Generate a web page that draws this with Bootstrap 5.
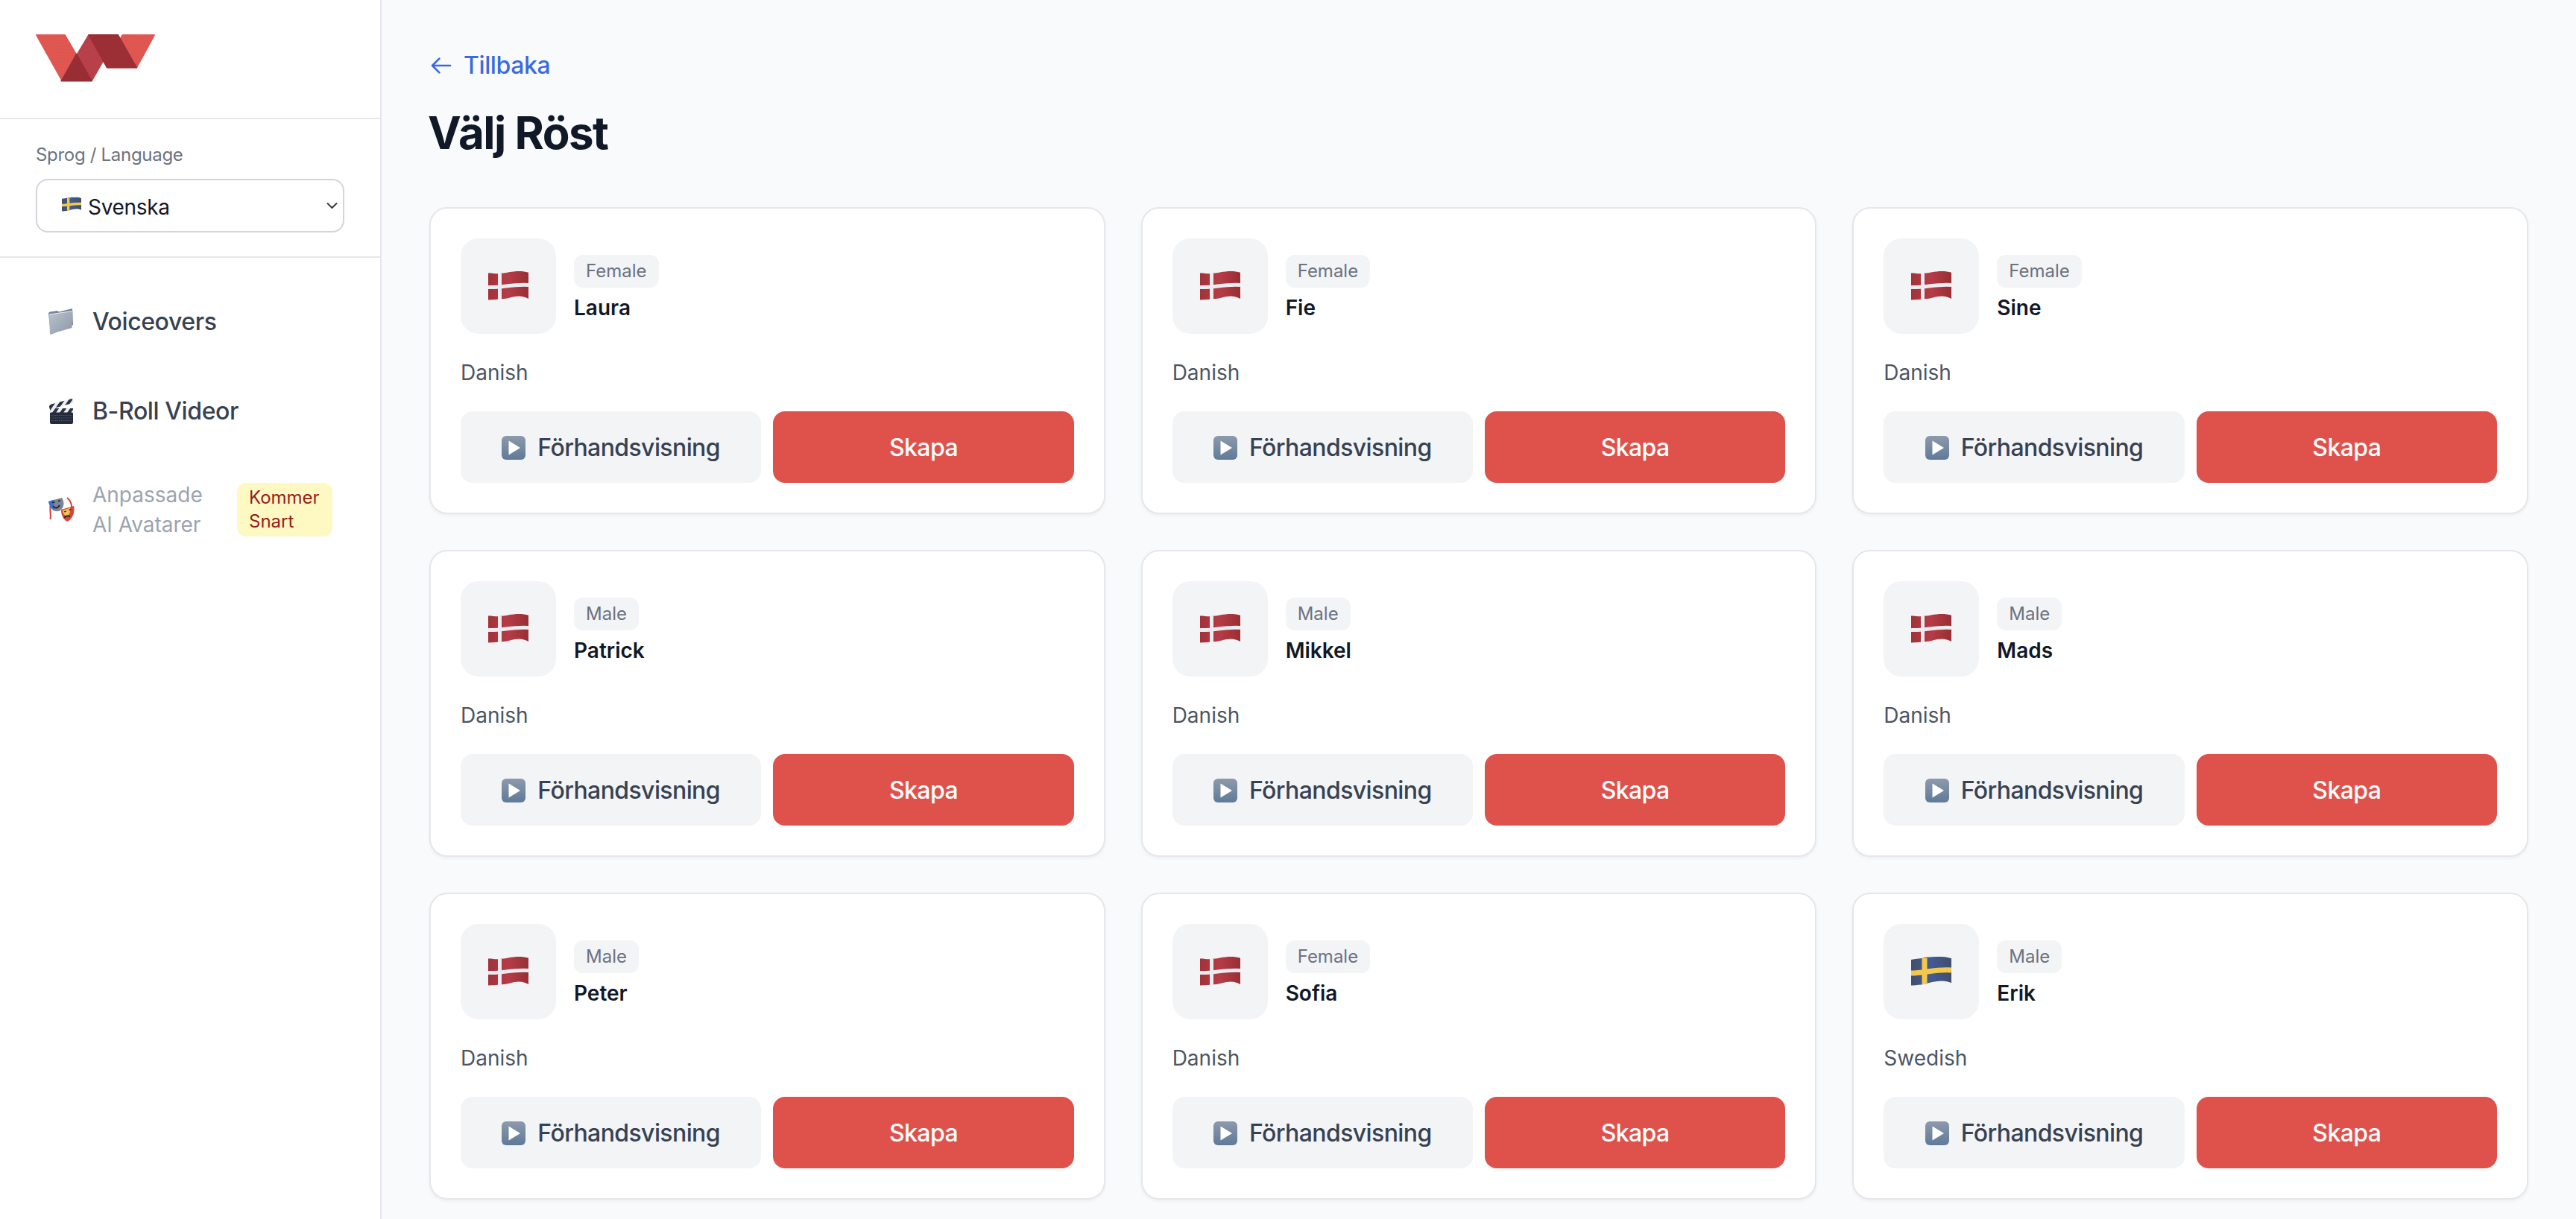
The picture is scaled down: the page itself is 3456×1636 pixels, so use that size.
<!DOCTYPE html>
<html lang="sv">
<head>
  <meta charset="UTF-8">
  <meta name="viewport" content="width=device-width, initial-scale=1.0">
  <title>Välj Röst</title>
  <link href="https://cdn.jsdelivr.net/npm/bootstrap@5.3.0/dist/css/bootstrap.min.css" rel="stylesheet">
  <style>
    body {
      font-family: Inter, "Liberation Sans", sans-serif;
      font-size: 32px;
      background-color: #f9fafb;
      color: #111827;
    }
    .side-panel {
      width: 512px;
      flex: 0 0 512px;
      background-color: #fff;
      border-right: 2px solid #e5e7eb;
    }
    .side-logo {
      height: 160px;
      padding: 46px 48px 0;
      border-bottom: 2px solid #e5e7eb;
    }
    .side-logo svg {
      display: block;
      width: 160px;
      height: 64px;
    }
    .lang-box {
      padding: 32px 48px;
      border-bottom: 2px solid #e5e7eb;
    }
    .lang-label {
      display: block;
      font-size: 24px;
      line-height: 32px;
      letter-spacing: -.3px;
      color: #6b7280;
      margin-bottom: 16px;
    }
    .lang-select {
      height: 72px;
      padding: 3px 40px 0 68px;
      font-size: 28px;
      letter-spacing: -.3px;
      color: #111827;
      border: 2px solid #d1d5db;
      border-radius: 16px;
      background-position: right 4px center;
      background-size: 21px 16px;
    }
    .lang-flag {
      position: absolute;
      left: 35px;
      top: 24px;
      width: 26px;
      height: 21px;
    }
    .side-nav {
      padding: 34px 32px;
      gap: 16px;
    }
    .nav-row {
      padding: 24px 32px;
      min-height: 104px;
      gap: 24px;
      font-size: 32px;
      font-weight: 500;
      line-height: 56px;
      letter-spacing: -.4px;
      color: #374151;
      text-decoration: none;
    }
    .nav-row svg {
      flex: 0 0 36px;
      width: 36px;
      height: 36px;
    }
    .nav-off {
      font-size: 28px;
      font-weight: 400;
      line-height: 40px;
      letter-spacing: 0;
      color: #9ca3af;
    }
    .soon-tag {
      margin-left: auto;
      min-width: 128px;
      padding: 4px 16px;
      font-size: 24px;
      line-height: 32px;
      color: #991b1b;
      background-color: #fef9c3;
      border-radius: 12px;
    }
    .main-area {
      padding: 64px;
      min-width: 0;
    }
    .back-link {
      gap: 14px;
      font-size: 32px;
      font-weight: 500;
      line-height: 48px;
      letter-spacing: -.4px;
      color: #3a6ae0;
      text-decoration: none;
      margin-bottom: 30px;
    }
    .back-link svg {
      width: 32px;
      height: 32px;
    }
    .page-title {
      margin-left: -2px;
      font-size: 60px;
      font-weight: 700;
      line-height: 72px;
      letter-spacing: -1.5px;
      color: #111827;
      margin-bottom: 64px;
    }
    .voice-grid {
      display: grid;
      grid-template-columns: repeat(3, 1fr);
      gap: 48px;
    }
    .voice-card {
      padding: 40px;
      border: 2px solid #e5e7eb;
      border-radius: 24px;
      box-shadow: 0 2px 4px rgba(0, 0, 0, .05);
    }
    .flag-box {
      width: 128px;
      height: 128px;
      background-color: #f3f4f6;
      border-radius: 24px;
    }
    .flag-box svg {
      width: 54px;
      height: 40px;
    }
    .voice-meta {
      margin-top: 6px;
    }
    .gender-tag {
      padding: 6px 16px;
      font-size: 24px;
      line-height: 32px;
      color: #6b7280;
      background-color: #f3f4f6;
      border-radius: 12px;
    }
    .voice-name {
      margin-top: 7px;
      font-size: 28px;
      font-weight: 600;
      line-height: 40px;
      color: #111827;
    }
    .voice-lang {
      margin: 32px 0;
      font-size: 28px;
      line-height: 40px;
      color: #4b5563;
    }
    .action-btn {
      flex: 1 1 0;
      height: 96px;
      padding: 2px 0 0;
      gap: 16px;
      font-size: 32px;
      font-weight: 500;
      letter-spacing: -.6px;
      border: 0;
      border-radius: 16px;
    }
    .action-btn svg {
      width: 32px;
      height: 32px;
    }
    .btn-preview, .btn-preview:hover {
      color: #374151;
      background-color: #f3f4f6;
    }
    .btn-create, .btn-create:hover {
      color: #fff;
      background-color: #df524c;
    }
  </style>
</head>
<body>
  <svg width="0" height="0" class="position-absolute">
    <defs>
      <linearGradient id="redFlag" x1="0" x2="1" y1="0" y2="0">
        <stop offset="0" stop-color="#a2323a"/>
        <stop offset=".5" stop-color="#b53c46"/>
        <stop offset="1" stop-color="#982e34"/>
      </linearGradient>
      <linearGradient id="blueFlag" x1="0" x2="1" y1="0" y2="0">
        <stop offset="0" stop-color="#424f6e"/>
        <stop offset=".5" stop-color="#425a94"/>
        <stop offset="1" stop-color="#414e6c"/>
      </linearGradient>
      <linearGradient id="playFill" x1="0" x2="0" y1="0" y2="1">
        <stop offset="0" stop-color="#8d9aab"/>
        <stop offset="1" stop-color="#5f7a99"/>
      </linearGradient>
      <linearGradient id="folderFill" x1="0" x2="1" y1="0" y2="1">
        <stop offset="0" stop-color="#bcc3cd"/>
        <stop offset="1" stop-color="#8a97a9"/>
      </linearGradient>
      <pattern id="clapStripes" width="10" height="8" patternUnits="userSpaceOnUse" patternTransform="skewX(-35)">
        <rect width="10" height="8" fill="#e9ebef"/>
        <rect width="5" height="8" fill="#2b3242"/>
      </pattern>
      <pattern id="logoGrain" width="6" height="6" patternUnits="userSpaceOnUse">
        <rect x="1" y="1" width="1.500" height="1.500" fill="#fff" opacity=".22"/>
        <rect x="4" y="4" width="1.500" height="1.500" fill="#fff" opacity=".16"/>
      </pattern>
      <symbol id="flag-dk" viewBox="0 0 54 40">
        <path d="M0 2.500C6 2.500 10 3.500 14 3.200 24 2.500 32 0 41 0 46 0 50 .5 54 1.800V37C50 35 46 33.500 41 33.500 33 33.500 28 36.500 21 37 13 37.500 6 38.500 0 38.500Z" fill="url(#redFlag)"/>
        <path d="M0 21.500C18 22.500 32 17 54 18.500" fill="none" stroke="#ebebf0" stroke-width="5"/>
        <path d="M15.500 3V38" stroke="#ebebf0" stroke-width="5"/>
      </symbol>
      <symbol id="flag-se" viewBox="0 0 54 40">
        <path d="M0 4C6 3 10 2.500 14 2 24 0 32 0 41 0 46 0 50 1 54 2.300V35.300C50 33.500 46 32.500 41 32.500 33 32.500 24 35 14 37.500 8 38 4 38.500 0 38.500Z" fill="url(#blueFlag)"/>
        <path d="M0 22C18 22 32 16.500 54 18" fill="none" stroke="#f2c94c" stroke-width="7"/>
        <path d="M18 2V37" stroke="#f2c94c" stroke-width="7"/>
      </symbol>
      <symbol id="icon-play" viewBox="0 0 32 32">
        <rect width="32" height="32" rx="6" fill="url(#playFill)"/>
        <path d="M9.500 6.500 25 16 9.500 25.500Z" fill="#fff"/>
      </symbol>
      <symbol id="icon-folder" viewBox="0 0 36 36">
        <path d="M1 6 3 4.500 13 3 15 4.500 33 0 34 22 4 35Z" fill="#77859a"/>
        <path d="M2 8 33.500 3.500 32.500 26 3 34.500Z" fill="url(#folderFill)"/>
        <path d="M2 8 33.500 3.500" stroke="#e8ebef" stroke-width="1"/>
      </symbol>
      <symbol id="icon-clapper" viewBox="0 0 36 36">
        <rect x="3" y="19" width="31" height="16" rx="2" fill="#232a3a"/>
        <path d="M5 23.500H32M5 27H32M5 30.500H32" stroke="#5a6376" stroke-width=".8" stroke-dasharray="1.500 1"/>
        <rect x="3" y="14" width="31" height="5.500" fill="url(#clapStripes)"/>
        <path d="M1 9.500 33 1 35 6.500 3 15.500Z" fill="url(#clapStripes)"/>
      </symbol>
      <symbol id="icon-masks" viewBox="0 0 36 36">
        <path d="M4 11C2 18 5 24 3.500 31M26 2C31 6 33 12 32 19" fill="none" stroke="#cf3f38" stroke-width="2"/>
        <path d="M1 7 19 2C23 8 22 15 17 19 10 23 3 17 1 7Z" fill="#7d8694"/>
        <path d="M1 7 9 4.500C7 10 8 15 10 20 5 18 2.500 13 1 7Z" fill="#3b6fd8"/>
        <path d="M7 13C10 17 14 16 16 12" fill="none" stroke="#1d2029" stroke-width="1.800"/>
        <path d="M6 8.500 9.500 8M14 6.500 17 6" stroke="#1d2029" stroke-width="1.300"/>
        <path d="M18 18 35 13C37 22 33 31 26 34 21 31 18 26 18 18Z" fill="#d5473c"/>
        <path d="M20 19 30 15.500C31 21 29 25 26 27 23 26 20.500 24 20 19Z" fill="#ecc44f"/>
        <path d="M22.500 29C24 26 27.500 25.500 30 27.500" fill="none" stroke="#1d2029" stroke-width="1.800"/>
        <path d="M22 21 25 20M28.500 18.500 31.500 18" stroke="#1d2029" stroke-width="1.300"/>
      </symbol>
    </defs>
  </svg>

  <div class="d-flex vh-100 overflow-hidden">
    <aside class="side-panel">
      <div class="side-logo">
        <svg viewBox="55 50 478 190" aria-label="Logo">
          <g stroke-width="4" stroke-linejoin="round">
            <path d="M402 52H531L460 183H340Z" fill="#df524c" stroke="#df524c"/>
            <path d="M267 52H385L280 236H157Z" fill="#b8404a" stroke="#b8404a"/>
            <path d="M267 52H385L460 183H340Z" fill="#9b2f35" stroke="#9b2f35"/>
            <path d="M57 52H172L280 236H160Z" fill="#df524c" stroke="#df524c"/>
            <path d="M218 128 157 236H280Z" fill="#982e34" stroke="#982e34"/>
          </g>
          <path d="M57 52H172L218 128 157 236Z M402 52H531L460 183 400 78Z" fill="url(#logoGrain)"/>
        </svg>
      </div>

      <div class="lang-box">
        <label class="lang-label" for="langSelect">Sprog / Language</label>
        <div class="position-relative">
          <select id="langSelect" class="form-select lang-select">
            <option>Svenska</option>
            <option>Dansk</option>
            <option>English</option>
          </select>
          <svg class="lang-flag"><use href="#flag-se"/></svg>
        </div>
      </div>

      <nav class="side-nav d-flex flex-column">
        <a href="#" class="nav-row d-flex align-items-center">
          <svg><use href="#icon-folder"/></svg>
          Voiceovers
        </a>
        <a href="#" class="nav-row d-flex align-items-center">
          <svg><use href="#icon-clapper"/></svg>
          B-Roll Videor
        </a>
        <a href="#" class="nav-row nav-off d-flex align-items-center">
          <svg><use href="#icon-masks"/></svg>
          <span>Anpassade<br>AI Avatarer</span>
          <span class="soon-tag">Kommer<br>Snart</span>
        </a>
      </nav>
    </aside>

    <main class="main-area flex-grow-1">
      <a href="#" class="back-link d-inline-flex align-items-center">
        <svg viewBox="0 0 24 24" fill="none" stroke="currentColor" stroke-width="2" stroke-linecap="round" stroke-linejoin="round">
          <path d="M10 19l-7-7m0 0l7-7m-7 7h18"/>
        </svg>
        Tillbaka
      </a>
      <h1 class="page-title">Välj Röst</h1>
      <div id="voiceGrid" class="voice-grid"></div>
    </main>
  </div>

  <script src="https://cdn.jsdelivr.net/npm/bootstrap@5.3.0/dist/js/bootstrap.bundle.min.js"></script>
  <script>
    const voices = [
      { name: 'Laura', gender: 'Female', language: 'Danish', flag: 'dk' },
      { name: 'Fie', gender: 'Female', language: 'Danish', flag: 'dk' },
      { name: 'Sine', gender: 'Female', language: 'Danish', flag: 'dk' },
      { name: 'Patrick', gender: 'Male', language: 'Danish', flag: 'dk' },
      { name: 'Mikkel', gender: 'Male', language: 'Danish', flag: 'dk' },
      { name: 'Mads', gender: 'Male', language: 'Danish', flag: 'dk' },
      { name: 'Peter', gender: 'Male', language: 'Danish', flag: 'dk' },
      { name: 'Sofia', gender: 'Female', language: 'Danish', flag: 'dk' },
      { name: 'Erik', gender: 'Male', language: 'Swedish', flag: 'se' },
    ];

    const voiceGrid = document.getElementById('voiceGrid');
    voices.forEach(voice => {
      const card = document.createElement('div');
      card.className = 'card voice-card';
      card.innerHTML = `
        <div class="d-flex align-items-center gap-4">
          <div class="flag-box d-flex align-items-center justify-content-center">
            <svg><use href="#flag-${voice.flag}"/></svg>
          </div>
          <div class="voice-meta d-flex flex-column align-items-start">
            <span class="gender-tag">${voice.gender}</span>
            <span class="voice-name">${voice.name}</span>
          </div>
        </div>
        <p class="voice-lang">${voice.language}</p>
        <div class="d-flex gap-3">
          <button type="button" class="btn action-btn btn-preview d-flex align-items-center justify-content-center">
            <svg><use href="#icon-play"/></svg>
            Förhandsvisning
          </button>
          <button type="button" class="btn action-btn btn-create">Skapa</button>
        </div>`;
      voiceGrid.appendChild(card);
    });
  </script>
</body>
</html>
